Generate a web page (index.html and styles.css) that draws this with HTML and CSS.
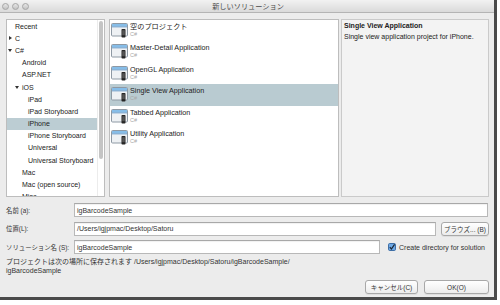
FILE: index.html
```html
<!DOCTYPE html>
<html lang="ja">
<head>
  <meta charset="UTF-8">
  <title>新しいソリューション</title>
  <link rel="stylesheet" href="styles.css">
</head>
<body>
  <div class="window">
    <!-- Title bar -->
    <div class="titlebar">
      <div class="lights"><span></span><span></span><span></span></div>
      <div class="title">新しいソリューション</div>
      <div></div>
    </div>

    <div class="content">
      <div class="panes">
        <!-- Category tree -->
        <div class="pane tree">
          <ul>
            <li class="lv1">Recent</li>
            <li class="lv1 has-arrow"><i class="arrow closed"></i>C</li>
            <li class="lv1 has-arrow"><i class="arrow open"></i>C#</li>
            <li class="lv2">Android</li>
            <li class="lv2">ASP.NET</li>
            <li class="lv2 has-arrow"><i class="arrow open"></i>iOS</li>
            <li class="lv3">iPad</li>
            <li class="lv3">iPad Storyboard</li>
            <li class="lv3 selected">iPhone</li>
            <li class="lv3">iPhone Storyboard</li>
            <li class="lv3">Universal</li>
            <li class="lv3">Universal Storyboard</li>
            <li class="lv2">Mac</li>
            <li class="lv2">Mac (open source)</li>
            <li class="lv2">Misc</li>
          </ul>
          <div class="scrollbar"><div class="thumb"></div></div>
        </div>

        <!-- Templates -->
        <div class="pane templates">
          <div class="template">
            <svg class="icon" width="17" height="15" viewBox="0 0 17 15"><rect x="0.5" y="0.5" width="16" height="12.5" rx="1" fill="#eef1f4" stroke="#8e99a4"/><rect x="1" y="1" width="15" height="2.5" fill="#86bde8"/><rect x="1" y="3.5" width="15" height="0.8" fill="#5a8fc0"/><rect x="10.5" y="6" width="4" height="8.5" rx="0.8" fill="#262626"/><rect x="11.2" y="7.2" width="2.6" height="5" fill="#555"/></svg>
            <div class="meta"><div class="name">空のプロジェクト</div><div class="lang">C#</div></div>
          </div>
          <div class="template">
            <svg class="icon" width="17" height="15" viewBox="0 0 17 15"><rect x="0.5" y="0.5" width="16" height="12.5" rx="1" fill="#eef1f4" stroke="#8e99a4"/><rect x="1" y="1" width="15" height="2.5" fill="#86bde8"/><rect x="1" y="3.5" width="15" height="0.8" fill="#5a8fc0"/><rect x="10.5" y="6" width="4" height="8.5" rx="0.8" fill="#262626"/><rect x="11.2" y="7.2" width="2.6" height="5" fill="#555"/></svg>
            <div class="meta"><div class="name">Master-Detail Application</div><div class="lang">C#</div></div>
          </div>
          <div class="template">
            <svg class="icon" width="17" height="15" viewBox="0 0 17 15"><rect x="0.5" y="0.5" width="16" height="12.5" rx="1" fill="#eef1f4" stroke="#8e99a4"/><rect x="1" y="1" width="15" height="2.5" fill="#86bde8"/><rect x="1" y="3.5" width="15" height="0.8" fill="#5a8fc0"/><rect x="10.5" y="6" width="4" height="8.5" rx="0.8" fill="#262626"/><rect x="11.2" y="7.2" width="2.6" height="5" fill="#555"/></svg>
            <div class="meta"><div class="name">OpenGL Application</div><div class="lang">C#</div></div>
          </div>
          <div class="template selected">
            <svg class="icon" width="17" height="15" viewBox="0 0 17 15"><rect x="0.5" y="0.5" width="16" height="12.5" rx="1" fill="#eef1f4" stroke="#8e99a4"/><rect x="1" y="1" width="15" height="2.5" fill="#86bde8"/><rect x="1" y="3.5" width="15" height="0.8" fill="#5a8fc0"/><rect x="10.5" y="6" width="4" height="8.5" rx="0.8" fill="#262626"/><rect x="11.2" y="7.2" width="2.6" height="5" fill="#555"/></svg>
            <div class="meta"><div class="name">Single View Application</div><div class="lang">C#</div></div>
          </div>
          <div class="template">
            <svg class="icon" width="17" height="15" viewBox="0 0 17 15"><rect x="0.5" y="0.5" width="16" height="12.5" rx="1" fill="#eef1f4" stroke="#8e99a4"/><rect x="1" y="1" width="15" height="2.5" fill="#86bde8"/><rect x="1" y="3.5" width="15" height="0.8" fill="#5a8fc0"/><rect x="10.5" y="6" width="4" height="8.5" rx="0.8" fill="#262626"/><rect x="11.2" y="7.2" width="2.6" height="5" fill="#555"/></svg>
            <div class="meta"><div class="name">Tabbed Application</div><div class="lang">C#</div></div>
          </div>
          <div class="template">
            <svg class="icon" width="17" height="15" viewBox="0 0 17 15"><rect x="0.5" y="0.5" width="16" height="12.5" rx="1" fill="#eef1f4" stroke="#8e99a4"/><rect x="1" y="1" width="15" height="2.5" fill="#86bde8"/><rect x="1" y="3.5" width="15" height="0.8" fill="#5a8fc0"/><rect x="10.5" y="6" width="4" height="8.5" rx="0.8" fill="#262626"/><rect x="11.2" y="7.2" width="2.6" height="5" fill="#555"/></svg>
            <div class="meta"><div class="name">Utility Application</div><div class="lang">C#</div></div>
          </div>
        </div>

        <!-- Description -->
        <div class="pane info">
          <div class="info-title">Single View Application</div>
          <div class="info-desc">Single view application project for iPhone.</div>
        </div>
      </div>

      <!-- Form -->
      <div class="form">
        <div class="row">
          <label class="label">名前 (a):</label>
          <div class="field grow">igBarcodeSample</div>
        </div>
        <div class="row">
          <label class="label">位置(L):</label>
          <div class="field grow">/Users/igjpmac/Desktop/Satoru</div>
          <div class="button browse">ブラウズ... (B)</div>
        </div>
        <div class="row">
          <label class="label">ソリューション名 (S):</label>
          <div class="field solution">igBarcodeSample</div>
          <div class="check">
            <svg width="8" height="8" viewBox="0 0 8 8"><rect x="0.5" y="0.5" width="7" height="7" rx="1.2" fill="#6fa9e6" stroke="#3f6fa6"/><path d="M1.8 4.2 L3.4 6 L6.6 1.4" fill="none" stroke="#1c2733" stroke-width="1.2"/></svg>
            <span>Create directory for solution</span>
          </div>
        </div>
      </div>

      <div class="note">プロジェクトは次の場所に保存されます /Users/igjpmac/Desktop/Satoru/igBarcodeSample/<br>igBarcodeSample</div>

      <div class="actions">
        <div class="button cancel">キャンセル(C)</div>
        <div class="button ok">OK(O)</div>
      </div>
    </div>
  </div>
</body>
</html>
```

FILE: styles.css
```css
* {
  box-sizing: border-box;
}

body {
  margin: 0;
  background: #fff;
  font-family: "Liberation Sans", "Noto Sans CJK JP", sans-serif;
  font-size: 7px;
  color: #222;
}

/* Dialog window */
.window {
  width: 497px;
  height: 300px;
  background: #ececec;
  border-right: 3px solid #4a4a4a;
  border-bottom: 3px solid #4a4a4a;
  display: flex;
  flex-direction: column;
}

.titlebar {
  height: 13px;
  border-bottom: 1px solid #b4b4b4;
  background: linear-gradient(#f2f2f2, #dadada);
  display: grid;
  grid-template-columns: 40px 1fr 40px;
  align-items: center;
}

.lights {
  display: flex;
  gap: 3px;
  padding-left: 2px;
}

.lights span {
  width: 7px;
  height: 7px;
  border-radius: 50%;
  border: 1px solid #a5a5a5;
  background: linear-gradient(#e6e6e6, #c4c4c4);
}

.title {
  text-align: center;
  font-size: 7.2px;
  color: #4a4a4a;
  padding-left: 2px;
}

.content {
  flex: 1;
  padding: 6px 5px 0 6px;
  display: flex;
  flex-direction: column;
}

/* Top panes */
.panes {
  display: flex;
  height: 178px;
}

.pane {
  border: 1px solid #bdbdbd;
  background: #fff;
}

.tree {
  width: 99px;
  margin-right: 4px;
  display: flex;
  overflow: hidden;
}

.tree ul {
  flex: 1;
  list-style: none;
  margin: 0;
  padding: 0;
  overflow: hidden;
}

.tree li {
  height: 12.2px;
  display: flex;
  align-items: center;
  white-space: nowrap;
  color: #222;
}

.tree .lv1 { padding-left: 8px; }
.tree .lv2 { padding-left: 15px; }
.tree .lv3 { padding-left: 21px; }
.tree .lv1.has-arrow { padding-left: 1px; }
.tree .lv2.has-arrow { padding-left: 8px; }

.tree li.selected {
  background: #bccdd3;
}

.arrow {
  width: 4px;
  height: 4px;
  margin-right: 3px;
  display: flex;
  align-items: center;
  justify-content: center;
}

.arrow.closed::before {
  content: "";
  border-left: 3.5px solid #333;
  border-top: 2.2px solid transparent;
  border-bottom: 2.2px solid transparent;
}

.arrow.open::before {
  content: "";
  border-top: 3.5px solid #333;
  border-left: 2.2px solid transparent;
  border-right: 2.2px solid transparent;
}

.scrollbar {
  width: 7px;
  border-left: 1px solid #ececec;
  padding: 1px 1px 0 1px;
}

.thumb {
  height: 138px;
  border-radius: 3px;
  background: #c4c4c4;
}

.templates {
  width: 230px;
  margin-right: 2px;
}

.template {
  height: 21.4px;
  display: flex;
  align-items: flex-start;
  padding: 3px 0 0 1px;
}

.template.selected {
  background: #b9cbd1;
}

.icon {
  flex: none;
  margin-right: 2px;
}

.meta .name {
  line-height: 8px;
  color: #222;
  font-size: 7.2px;
}

.meta .lang {
  line-height: 6px;
  font-size: 5.5px;
  color: #a9a9a9;
}

.info {
  width: 148px;
  background: #f3f3f3;
  border-color: #cacaca;
  padding: 1px 2px;
}

.info-title {
  font-weight: bold;
  line-height: 10px;
}

.info-desc {
  line-height: 10px;
  margin-top: 1px;
}

/* Form rows */
.form {
  margin-top: 6px;
  display: flex;
  flex-direction: column;
  gap: 4.5px;
}

.row {
  display: flex;
  align-items: center;
  height: 14px;
}

.label {
  width: 68px;
  flex: none;
  color: #333;
  white-space: nowrap;
  font-size: 6.4px;
}

.field {
  height: 14px;
  border: 1px solid #b8b8b8;
  border-top-color: #a8a8a8;
  background: #fff;
  box-shadow: inset 0 1px 1px rgba(0, 0, 0, 0.06);
  padding-left: 2px;
  display: flex;
  align-items: center;
  color: #333;
}

.field.grow {
  flex: 1;
  margin-right: 1px;
}

.field.solution {
  width: 306px;
}

.button {
  height: 14px;
  border: 1px solid #a8a8a8;
  border-radius: 3px;
  background: linear-gradient(#ffffff, #ececec);
  box-shadow: 0 1px 0 rgba(0, 0, 0, 0.06);
  display: flex;
  align-items: center;
  justify-content: center;
  color: #333;
  font-size: 6.5px;
  white-space: nowrap;
}

.browse {
  width: 48px;
  margin-left: 4px;
}

.check {
  display: flex;
  align-items: center;
  margin-left: 8px;
  gap: 3px;
  color: #333;
  white-space: nowrap;
}

.note {
  margin-top: 3px;
  line-height: 9px;
  color: #333;
  font-size: 7px;
}

.actions {
  margin-top: 5px;
  display: flex;
  justify-content: flex-end;
  gap: 6px;
}

.cancel {
  width: 53px;
}

.ok {
  width: 65px;
}
```
